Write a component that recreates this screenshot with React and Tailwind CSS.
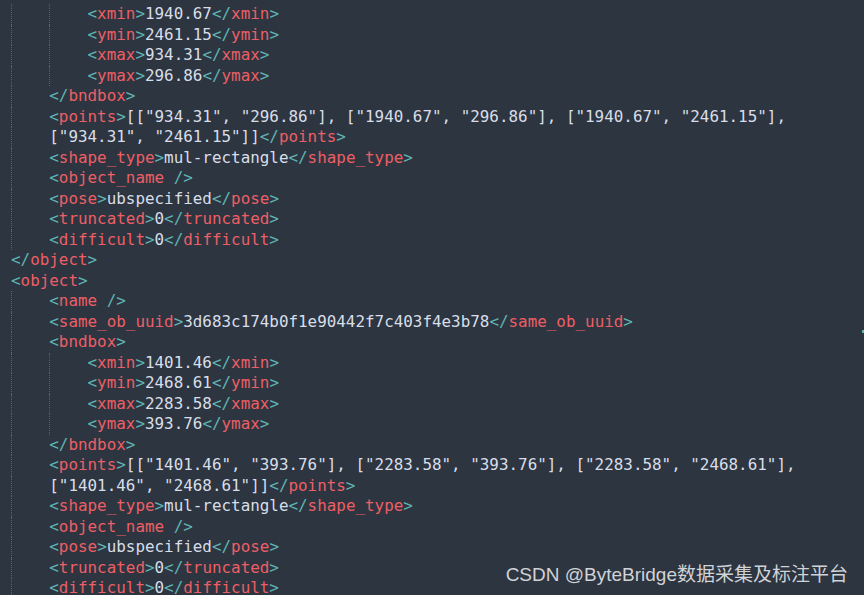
import React from "react";

const LINES = [
  [2, "<xmin>1940.67</xmin>"],
  [2, "<ymin>2461.15</ymin>"],
  [2, "<xmax>934.31</xmax>"],
  [2, "<ymax>296.86</ymax>"],
  [1, "</bndbox>"],
  [1, '<points>[["934.31", "296.86"], ["1940.67", "296.86"], ["1940.67", "2461.15"],'],
  [1, '["934.31", "2461.15"]]</points>'],
  [1, "<shape_type>mul-rectangle</shape_type>"],
  [1, "<object_name />"],
  [1, "<pose>ubspecified</pose>"],
  [1, "<truncated>0</truncated>"],
  [1, "<difficult>0</difficult>"],
  [0, "</object>"],
  [0, "<object>"],
  [1, "<name />"],
  [1, "<same_ob_uuid>3d683c174b0f1e90442f7c403f4e3b78</same_ob_uuid>"],
  [1, "<bndbox>"],
  [2, "<xmin>1401.46</xmin>"],
  [2, "<ymin>2468.61</ymin>"],
  [2, "<xmax>2283.58</xmax>"],
  [2, "<ymax>393.76</ymax>"],
  [1, "</bndbox>"],
  [1, '<points>[["1401.46", "393.76"], ["2283.58", "393.76"], ["2283.58", "2468.61"],'],
  [1, '["1401.46", "2468.61"]]</points>'],
  [1, "<shape_type>mul-rectangle</shape_type>"],
  [1, "<object_name />"],
  [1, "<pose>ubspecified</pose>"],
  [1, "<truncated>0</truncated>"],
  [1, "<difficult>0</difficult>"],
];

function tokenize(s) {
  const out = [];
  const re = /(<\/?)([\w_]+)(\s*\/?>)/g;
  let last = 0;
  let m;
  while ((m = re.exec(s))) {
    if (m.index > last) out.push(["x", s.slice(last, m.index)]);
    out.push(["b", m[1]]);
    out.push(["t", m[2]]);
    out.push(["b", m[3]]);
    last = re.lastIndex;
  }
  if (last < s.length) out.push(["x", s.slice(last)]);
  return out;
}

const COLORS = {
  b: "text-[#5fb4b4]",
  t: "text-[#ec5f66]",
  x: "text-[#d8dee9]",
};

function Line({ level, text }) {
  const indents = [];
  for (let i = 0; i < level; i++) {
    indents.push(
      <span
        key={i}
        className="inline-block h-full w-[4ch] shrink-0 border-l border-dotted border-[#59636e]"
      />
    );
  }
  return (
    <div className="flex h-[20.5px] items-center whitespace-pre">
      {indents}
      <span>
        {tokenize(text).map(([k, v], i) => (
          <span key={i} className={COLORS[k]}>
            {v}
          </span>
        ))}
      </span>
    </div>
  );
}

export default function App() {
  return (
    <div className="relative h-[595px] w-[864px] overflow-hidden bg-[#2d3540]">
      <div
        className="pl-[11px] pt-[4px] text-[15.9px] leading-[20.5px]"
        style={{ fontFamily: '"DejaVu Sans Mono", "Liberation Mono", monospace' }}
      >
        {LINES.map(([lvl, txt], i) => (
          <Line key={i} level={lvl} text={txt} />
        ))}
      </div>
      <div className="absolute right-0 top-[330px] h-[3px] w-[2px] bg-[#5fb4b4]" />
      <div
        className="absolute right-[16px] top-[563px] text-[19px] leading-[24px] text-[#d0d3d7]"
        style={{ fontFamily: '"Liberation Sans", "Noto Sans CJK SC", sans-serif' }}
      >
        CSDN @ByteBridge数据采集及标注平台
      </div>
    </div>
  );
}
